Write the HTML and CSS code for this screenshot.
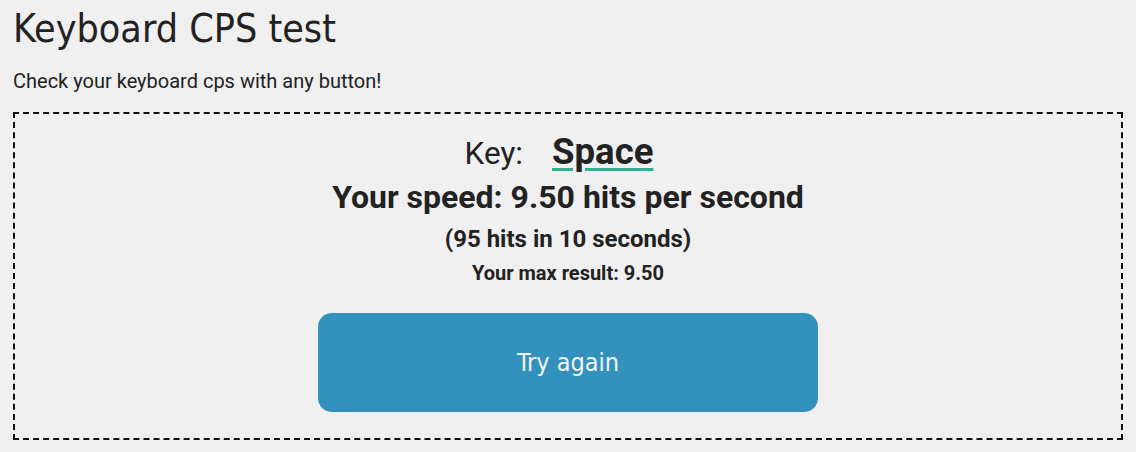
FILE: index.html
```html
<!DOCTYPE html>
<html>
<head>
<meta charset="utf-8">
<link rel="stylesheet" href="styles.css">
</head>
<body>
<div class="page">
  <h1 class="title">Keyboard CPS test</h1>
  <p class="subtitle">Check your keyboard cps with any button!</p>
  <div class="box">
    <div class="key-line"><span class="key-label">Key:</span><span class="key-name">Space</span></div>
    <div class="speed">Your speed: 9.50 hits per second</div>
    <div class="hits">(95 hits in 10 seconds)</div>
    <div class="max">Your max result: 9.50</div>
    <button class="retry">Try again</button>
  </div>
</div>
</body>
</html>
```
FILE: styles.css
```css
html, body {
  margin: 0;
  padding: 0;
  background: #f0f0f0;
}
.page {
  padding: 0 13px;
  color: #222;
}
.title {
  margin: 0;
  padding-top: 6px;
  font-family: "DejaVu Sans Condensed", "DejaVu Sans", sans-serif;
  font-weight: normal;
  font-size: 39.1px;
  line-height: 46px;
  color: #222;
}
.subtitle {
  margin: 17px 0 0;
  font-family: Roboto, sans-serif;
  font-size: 20px;
  line-height: 24px;
  color: #222;
}
.box {
  margin-top: 19px;
  padding-bottom: 26px;
  box-sizing: border-box;
  border: 2px dashed #111;
  display: flex;
  flex-direction: column;
  align-items: center;
  font-family: Roboto, sans-serif;
  color: #222;
}
.key-line {
  margin-top: 18px;
  margin-right: 18px;
  height: 40px;
  display: flex;
  align-items: baseline;
  gap: 29px;
  line-height: 40px;
}
.key-label {
  font-size: 31.5px;
  font-weight: normal;
}
.key-name {
  font-size: 36.6px;
  font-weight: bold;
  text-decoration: underline;
  text-decoration-color: #2bb38d;
  text-decoration-thickness: 3px;
  text-underline-offset: 4px;
}
.speed {
  margin-top: 5px;
  font-size: 32px;
  font-weight: bold;
  line-height: 40px;
}
.hits {
  margin-top: 7px;
  font-size: 24px;
  font-weight: bold;
  line-height: 30px;
}
.max {
  margin-top: 6px;
  font-size: 20px;
  font-weight: bold;
  line-height: 26px;
}
.retry {
  margin-top: 27px;
  width: 500px;
  height: 99px;
  border: none;
  border-radius: 14px;
  background: #3292bd;
  color: #f4f4f4;
  font-family: "DejaVu Sans Condensed", "DejaVu Sans", sans-serif;
  font-size: 25px;
}
```
